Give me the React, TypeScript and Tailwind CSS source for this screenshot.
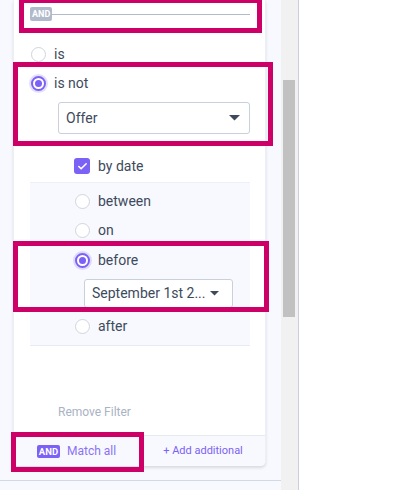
import { Check } from "lucide-react";

const Radio = ({ checked, label }: { checked?: boolean; label: string }) => (
  <div className="flex items-center h-[29px] gap-[8px]">
    {checked ? (
      <span className="w-[15px] h-[15px] rounded-full border-2 border-[#7b61f5] ring-2 ring-[#7b61f5]/20 flex items-center justify-center bg-white">
        <span className="w-[7px] h-[7px] rounded-full bg-[#7b61f5]" />
      </span>
    ) : (
      <span className="w-[15px] h-[15px] rounded-full border border-[#cfd5df] bg-white" />
    )}
    <span className="text-[14px] text-[#3e4a5c]">{label}</span>
  </div>
);

const Caret = ({ size }: { size: number }) => (
  <svg width={size} height={size / 2} viewBox="0 0 10 5">
    <path d="M0 0 L10 0 L5 5 Z" fill="#3e4a5c" />
  </svg>
);

const App = () => {
  return (
    <div
      className="relative w-[401px] h-[490px] flex bg-white overflow-hidden"
      style={{ fontFamily: "Roboto, 'Liberation Sans', sans-serif" }}
    >
      {/* left panel */}
      <div className="w-[281px] h-full bg-[#f8f9fe] flex flex-col">
        <div className="ml-[13px] w-[253px] bg-white border-x border-[#eceff5] rounded-b-[5px] shadow-[0_2px_3px_rgba(0,0,0,0.12)] flex flex-col">
          <div className="pl-[16px] pr-[15px]">
            <div className="flex items-center h-[28px]">
              <span className="bg-[#b1bacb] text-white text-[9px] font-bold rounded-[2px] px-[2px] h-[14px] leading-[14px]">
                AND
              </span>
              <span className="flex-1 h-px bg-[#b1bacb]" />
            </div>
            <div className="mt-[12px] pl-[1px]">
              <Radio label="is" />
              <Radio checked label="is not" />
            </div>
            <div className="ml-[28px] mt-[4px] h-[32px] border border-[#c8d0dc] rounded-[3px] flex items-center justify-between pl-[7px] pr-[9px]">
              <span className="text-[14px] text-[#3e4a5c]">Offer</span>
              <Caret size={11} />
            </div>
            <div className="mt-[16px] h-[33px] flex items-center gap-[8px] pl-[44px] border-b border-[#eef0f5]">
              <span className="w-[16px] h-[16px] rounded-[3px] bg-[#7b61f5] flex items-center justify-center">
                <Check className="w-[11px] h-[11px] text-white" strokeWidth={3.5} />
              </span>
              <span className="text-[14px] text-[#3e4a5c]">by date</span>
            </div>
            <div className="bg-[#f8f9fe] border-b border-[#e8ebf2] pt-[4px] pb-[4px] pl-[45px]">
              <Radio label="between" />
              <Radio label="on" />
              <div className="mt-[1px]">
                <Radio checked label="before" />
              </div>
              <div className="ml-[9px] mt-[4px] w-[149px] h-[29px] border border-[#c8d0dc] rounded-[3px] bg-white flex items-center justify-between pl-[7px] pr-[13px]">
                <span className="text-[14px] text-[#3e4a5c] whitespace-nowrap">September 1st 2...</span>
                <Caret size={9} />
              </div>
              <div className="mt-[4px]">
                <Radio label="after" />
              </div>
            </div>
            <div className="mt-[58px] mb-[15px] h-[16px] pl-[28px] text-[12px] leading-[16px] text-[#a9b3c4]">
              Remove Filter
            </div>
          </div>
          <div className="h-[31px] border-t border-[#e5e9f0] bg-[#f8f9fe] rounded-b-[5px] flex items-center pl-[23px]">
            <span className="bg-[#7b61f5] text-white text-[9.5px] font-bold rounded-[2px] w-[23px] h-[13px] leading-[13px] text-center">
              AND
            </span>
            <span className="ml-[7px] text-[12px] text-[#8a72f5]">Match all</span>
            <span className="ml-[47px] text-[11px] text-[#7b61f5]">+ Add additional</span>
          </div>
        </div>
        <div className="h-[15px] border-b border-[#d3d9e4]" />
      </div>

      {/* scrollbar */}
      <div className="w-[18px] h-full bg-[#f1f1f1] flex flex-col pl-[2px] pr-[3px] border-r border-[#c8d0dc]">
        <div className="mt-[80px] h-[237px] bg-[#c1c1c1]" />
      </div>

      {/* annotations */}
      <div className="absolute left-[19px] top-[-2px] w-[243px] h-[35px] border-[5px] border-[#cc0066]" />
      <div className="absolute left-[13px] top-[62px] w-[260px] h-[84px] border-[5px] border-[#cc0066]" />
      <div className="absolute left-[13px] top-[241px] w-[256px] h-[71px] border-[5px] border-[#cc0066]" />
      <div className="absolute left-[11px] top-[432px] w-[133px] h-[40px] border-[5px] border-[#cc0066]" />
    </div>
  );
};

export default App;
